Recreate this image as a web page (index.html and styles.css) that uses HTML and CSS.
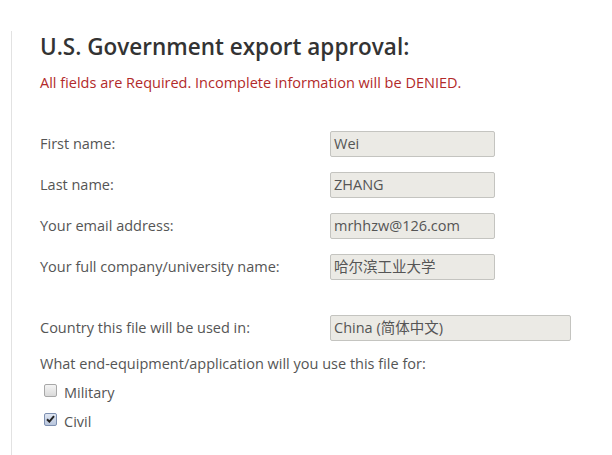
FILE: index.html
```html
<!DOCTYPE html>
<html>
<head>
<meta charset="utf-8">
<link rel="stylesheet" href="styles.css">
</head>
<body>
<div class="panel">
  <h1 class="title">U.S. Government export approval:</h1>
  <p class="warn">All fields are Required. Incomplete information will be DENIED.</p>
  <div class="rows">
    <label class="lbl">First name:</label><div class="field">Wei</div>
    <label class="lbl">Last name:</label><div class="field">ZHANG</div>
    <label class="lbl">Your email address:</label><div class="field">mrhhzw@126.com</div>
    <label class="lbl">Your full company/university name:</label><div class="field">哈尔滨工业大学</div>
  </div>
  <div class="rows country">
    <label class="lbl">Country this file will be used in:</label><div class="field wide">China (简体中文)</div>
  </div>
  <p class="question">What end-equipment/application will you use this file for:</p>
  <div class="check"><span class="box"></span>Military</div>
  <div class="check"><span class="box checked"><svg width="9" height="8" viewBox="0 0 9 8"><path d="M1 4.2 L3.4 6.6 L8 1.2" fill="none" stroke="#222" stroke-width="2"/></svg></span>Civil</div>
</div>
</body>
</html>
```
FILE: styles.css
```css
html, body { margin: 0; padding: 0; background: #fff; }
body { font-family: "Open Sans", "Noto Sans CJK SC", sans-serif; color: #555; }
.panel {
  margin-left: 11px;
  margin-top: 31px;
  border-left: 1px solid #e2e2e2;
  padding-left: 28px;
  height: 424px;
}
.title {
  margin: 0;
  padding-top: 1px;
  font-size: 22.5px;
  font-weight: 600;
  color: #333;
  line-height: 30px;
}
.warn {
  margin: 11px 0 0;
  font-size: 14.5px;
  line-height: 20px;
  color: #b22a2a;
}
.rows {
  display: grid;
  grid-template-columns: 290px auto;
  row-gap: 15px;
  margin-top: 38px;
  align-items: center;
}
.lbl { font-size: 14.5px; line-height: 20px; color: #555; }
.field {
  width: 160px;
  height: 24px;
  border: 1px solid #c4c4c0;
  border-radius: 2px;
  background: #ebeae5;
  font-size: 14.5px;
  line-height: 24px;
  padding-left: 3px;
  color: #555;
  box-sizing: content-box;
  justify-self: start;
  font-family: "Open Sans", "Noto Sans CJK SC", sans-serif;
}
.field.wide { width: 236px; }
.country { margin-top: 35px; }
.question { margin: 13px 0 0; font-size: 14.5px; line-height: 20px; }
.check { display: flex; align-items: center; font-size: 14.5px; line-height: 20px; margin-top: 9px; }
.check .box {
  width: 11px; height: 11px;
  border: 1px solid #a8a8a8;
  border-radius: 2px;
  background: linear-gradient(#f4f4f4, #dadada);
  margin: 0 7px 0 4px;
  position: relative;
  top: -3px;
  display: flex; align-items: center; justify-content: center;
}
.check .box.checked { border-color: #7d8fb0; background: linear-gradient(#dfe6f2, #b8c5dc); }
```
